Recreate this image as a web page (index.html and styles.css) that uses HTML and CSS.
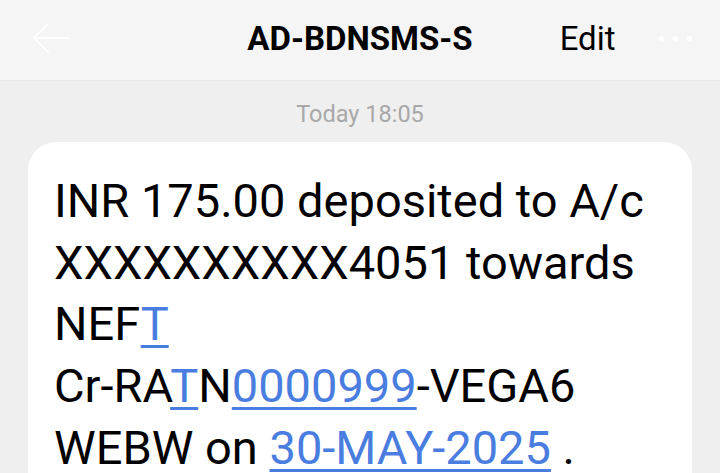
FILE: index.html
```html
<!DOCTYPE html>
<html lang="en">
<head>
    <meta charset="UTF-8">
    <meta name="viewport" content="width=device-width, initial-scale=1.0">
    <title>AD-BDNSMS-S</title>
    <link rel="stylesheet" href="styles.css">
</head>
<body>
    <div class="header">
        <div class="back">
            <svg width="40" height="34" viewBox="0 0 40 34">
                <path d="M4 17 H38 M18 3 L4 17 L18 31" fill="none" stroke="#fff" stroke-width="2" stroke-linecap="round" stroke-linejoin="round"/>
            </svg>
        </div>
        <h1 class="title">AD-BDNSMS-S</h1>
        <div class="actions">
            <span class="edit">Edit</span>
            <span class="more"><i></i><i></i><i></i></span>
        </div>
    </div>

    <div class="thread">
        <div class="time">Today 18:05</div>
        <div class="bubble">
            <p>INR 175.00 deposited to A/c XXXXXXXXXX4051 towards NEF<a href="#">T</a><br>Cr-RA<a href="#">T</a>N<a href="#">0000999</a>-VEGA6 WEBW on <a href="#">30-MAY-2025</a> .</p>
        </div>
    </div>
</body>
</html>
```

FILE: styles.css
```css
body {
    margin: 0;
    padding: 0;
    font-family: Roboto, "Liberation Sans", sans-serif;
    background-color: #efefef;
    overflow: hidden;
}

.header {
    height: 81px;
    display: grid;
    grid-template-columns: 1fr auto 1fr;
    align-items: center;
    background-color: #f5f5f5;
    border-bottom: 1px solid #ebebeb;
    box-sizing: border-box;
    padding-bottom: 4px;
}

.back {
    padding-left: 30px;
    display: flex;
}

.title {
    margin: 0;
    font-size: 33px;
    font-weight: bold;
    color: #000;
}

.actions {
    display: flex;
    align-items: center;
    padding-left: 87px;
}

.edit {
    font-size: 33px;
    color: #000;
}

.more {
    display: flex;
    gap: 9px;
    margin-left: auto;
    margin-right: 28px;
}

.more i {
    width: 5px;
    height: 5px;
    border-radius: 50%;
    background-color: #fff;
}

.thread {
    padding: 0 28px;
}

.time {
    text-align: center;
    font-size: 23.5px;
    color: #a8a8a8;
    padding-top: 19px;
    height: 61px;
    box-sizing: border-box;
}

.bubble {
    background-color: #fff;
    border-radius: 28px;
    padding: 28px 26px;
}

.bubble p {
    margin: 0;
    font-size: 47px;
    line-height: 61.7px;
    color: #000;
}

.bubble a {
    color: #4a7de0;
    text-decoration: underline;
    text-decoration-thickness: 3px;
    text-underline-offset: 5px;
}
```
